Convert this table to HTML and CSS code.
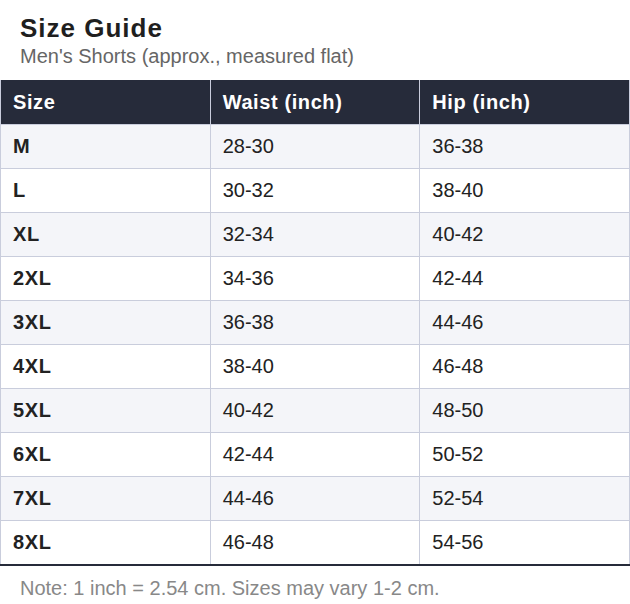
FILE: index.html
```html
<!DOCTYPE html>
<html>
<head>
<meta charset="utf-8">
<link rel="stylesheet" href="styles.css">
</head>
<body>
<div class="head">
  <h1 class="title">Size Guide</h1>
  <div class="subtitle">Men's Shorts (approx., measured flat)</div>
</div>
<table class="sizes">
  <thead>
    <tr><th>Size</th><th>Waist (inch)</th><th>Hip (inch)</th></tr>
  </thead>
  <tbody>
    <tr><td class="sz">M</td><td>28-30</td><td>36-38</td></tr>
    <tr><td class="sz">L</td><td>30-32</td><td>38-40</td></tr>
    <tr><td class="sz">XL</td><td>32-34</td><td>40-42</td></tr>
    <tr><td class="sz">2XL</td><td>34-36</td><td>42-44</td></tr>
    <tr><td class="sz">3XL</td><td>36-38</td><td>44-46</td></tr>
    <tr><td class="sz">4XL</td><td>38-40</td><td>46-48</td></tr>
    <tr><td class="sz">5XL</td><td>40-42</td><td>48-50</td></tr>
    <tr><td class="sz">6XL</td><td>42-44</td><td>50-52</td></tr>
    <tr><td class="sz">7XL</td><td>44-46</td><td>52-54</td></tr>
    <tr><td class="sz">8XL</td><td>46-48</td><td>54-56</td></tr>
  </tbody>
</table>
<div class="note">Note: 1 inch = 2.54 cm. Sizes may vary 1-2 cm.</div>
</body>
</html>
```
FILE: styles.css
```css
html, body {
  margin: 0;
  padding: 0;
  background: #ffffff;
  font-family: "Liberation Sans", Arial, sans-serif;
  color: #222222;
}
.head {
  padding: 13px 20px 0;
}
.title {
  margin: 0;
  font-size: 26px;
  line-height: 30px;
  font-weight: bold;
  letter-spacing: 1px;
  color: #1f1f1f;
}
.subtitle {
  margin-top: 1px;
  font-size: 20px;
  line-height: 24px;
  color: #666666;
}
.sizes {
  margin-top: 12px;
  width: 630px;
  border-collapse: collapse;
  table-layout: fixed;
  font-size: 20px;
}
.sizes th, .sizes td {
  border: 1px solid #c9cddc;
  padding: 0 12px;
  height: 43px;
  text-align: left;
  vertical-align: middle;
}
.sizes th {
  height: 44px;
  background: #262b3a;
  color: #ffffff;
  font-weight: bold;
  letter-spacing: 0.6px;
  border-top: none;
  border-bottom: none;
}
.sizes tbody tr:nth-child(odd) td {
  background: #f4f5f9;
}
.sizes td {
  color: #222222;
}
.sizes td.sz {
  font-weight: bold;
  letter-spacing: 0.6px;
}
.sizes tbody tr:last-child td {
  border-bottom: 2px solid #262b3a;
}
.note {
  padding: 10px 20px 0;
  font-size: 20px;
  line-height: 24px;
  color: #888888;
}
```
